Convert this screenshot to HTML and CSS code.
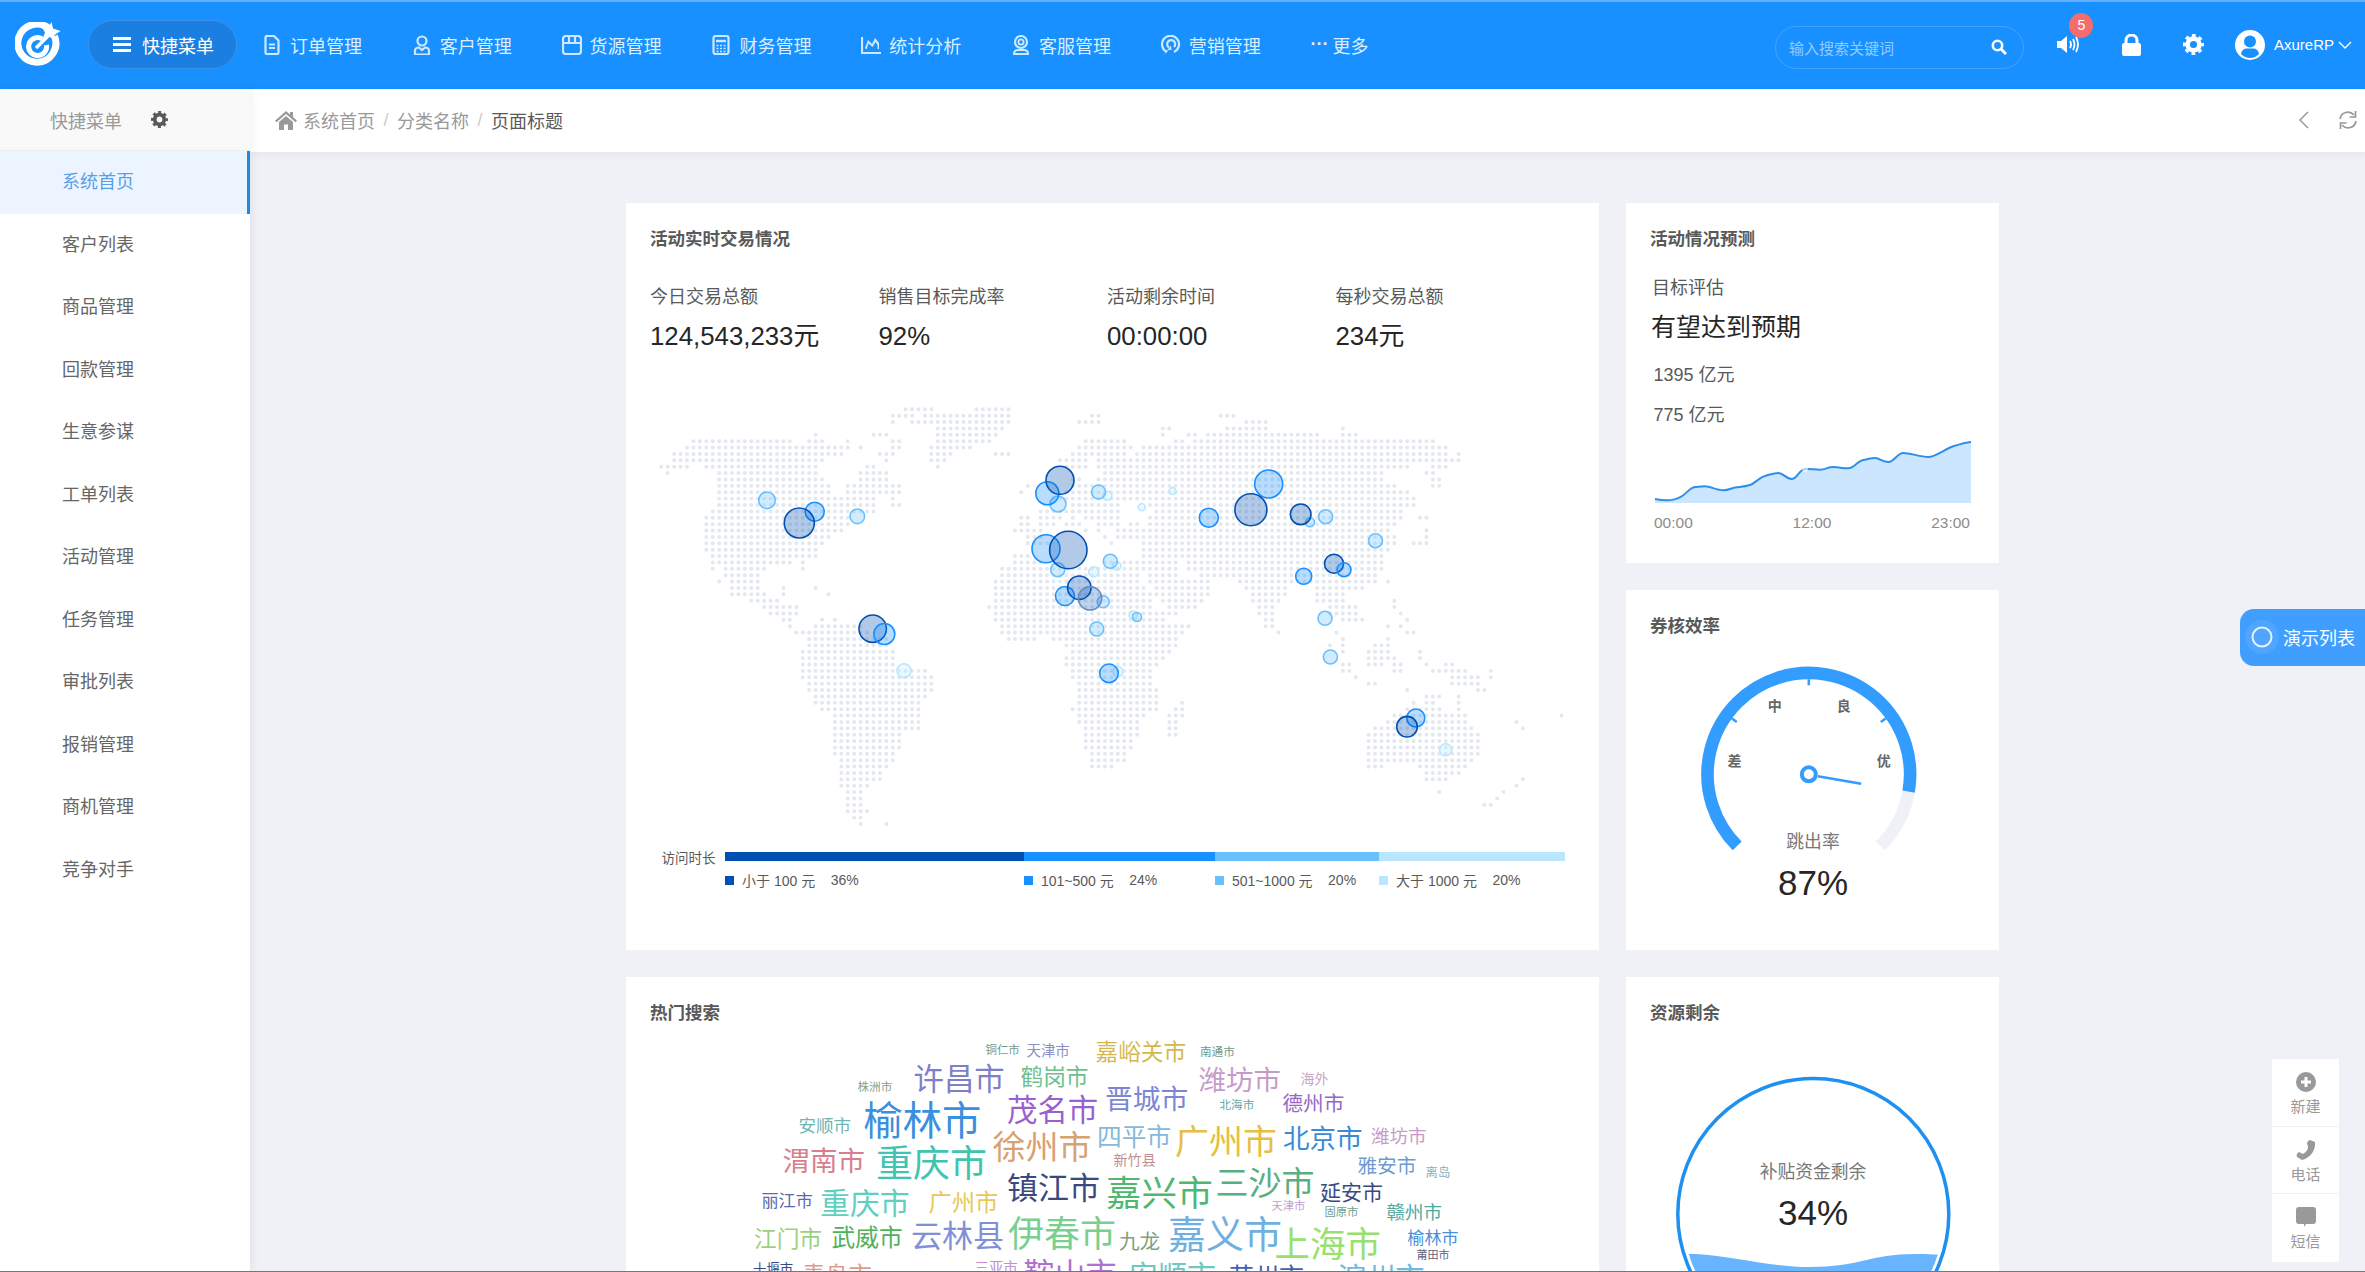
FILE: index.html
```html
<!DOCTYPE html>
<html lang="zh-CN">
<head>
<meta charset="utf-8">
<title>系统首页</title>
<link rel="stylesheet" href="styles.css">
</head>
<body>
<svg class="defs" width="0" height="0" aria-hidden="true">
  <symbol id="gear" viewBox="0 0 20 20">
    <circle cx="10" cy="10" r="5.6" fill="none" stroke="currentColor" stroke-width="4.4"/>
    <circle cx="10" cy="10" r="8.3" fill="none" stroke="currentColor" stroke-width="3.4" stroke-dasharray="3.4 3.12" stroke-dashoffset="1.7"/>
  </symbol>
</svg>
<div class="app">
  <header class="topbar">
    <svg class="logo" viewBox="0 0 46 46">
      <path d="M34 6.5A19 19 0 1 0 39.5 14" fill="none" stroke="#fff" stroke-width="7"/>
      <path d="M27.5 17A9 9 0 1 0 31.5 23" fill="none" stroke="#fff" stroke-width="5"/>
      <path d="M21 26L35 12" stroke="#fff" stroke-width="3.5"/>
      <path d="M36.5 0L38 6.5L45.5 9L39.5 13L39.5 18L34 14.5L28 16L30 10.5L27 5.5L33 6Z" fill="#fff"/>
    </svg>
    <button class="quick">
      <svg class="quick-icon" viewBox="0 0 18 15"><path d="M0 1.5H18M0 7.5H18M0 13.5H18" stroke="#fff" stroke-width="3"/></svg>
      <span>快捷菜单</span>
    </button>
    <nav class="nav">
      <a class="nav-item">
        <svg viewBox="0 0 20 20" class="nav-icon"><path d="M3.5 2.5Q3.5 1 5 1H12L16.5 5.5V17.5Q16.5 19 15 19H5Q3.5 19 3.5 17.5Z" fill="none" stroke="currentColor" stroke-width="2.2"/><path d="M7 9.5H13M7 13H13" stroke="currentColor" stroke-width="1.8"/></svg>
        <span>订单管理</span>
      </a>
      <a class="nav-item">
        <svg viewBox="0 0 20 20" class="nav-icon"><circle cx="10" cy="6" r="4.5" fill="none" stroke="currentColor" stroke-width="2.2"/><path d="M3 19.5V16Q3 12.5 7 12.5L10 15L13 12.5Q17 12.5 17 16V19.5Z" fill="none" stroke="currentColor" stroke-width="2.2"/></svg>
        <span>客户管理</span>
      </a>
      <a class="nav-item">
        <svg viewBox="0 0 20 20" class="nav-icon"><path d="M1 4Q1 1 4 1H16Q19 1 19 4V16Q19 19 16 19H4Q1 19 1 16ZM1 8H19M7 1V8M13 1V8" fill="none" stroke="currentColor" stroke-width="2.2"/></svg>
        <span>货源管理</span>
      </a>
      <a class="nav-item">
        <svg viewBox="0 0 20 20" class="nav-icon"><rect x="2.5" y="1" width="15" height="18" rx="2" fill="none" stroke="currentColor" stroke-width="2.2"/><path d="M5 6H15" stroke="currentColor" stroke-width="2.4"/><path d="M5.5 10.5H14.5M5.5 13.5H14.5M5.5 16.5H14.5" stroke="currentColor" stroke-width="1.7" stroke-dasharray="2 1.5"/></svg>
        <span>财务管理</span>
      </a>
      <a class="nav-item">
        <svg viewBox="0 0 20 20" class="nav-icon"><path d="M1 2V18H20" fill="none" stroke="currentColor" stroke-width="2.2"/><path d="M4 13L7 5L11 9L14 3L18 8V14H5Z" fill="currentColor"/><path d="M6 13L7.5 8.5L11.5 12L14.5 7L16.5 10V14H6Z" fill="#1890ff"/></svg>
        <span>统计分析</span>
      </a>
      <a class="nav-item">
        <svg viewBox="0 0 20 20" class="nav-icon"><circle cx="10" cy="7" r="6" fill="none" stroke="currentColor" stroke-width="2.2"/><circle cx="10" cy="7" r="2.6" fill="none" stroke="currentColor" stroke-width="1.8"/><path d="M3 19Q3 15 7 15H13Q17 15 17 19Z" fill="none" stroke="currentColor" stroke-width="2"/></svg>
        <span>客服管理</span>
      </a>
      <a class="nav-item">
        <svg viewBox="0 0 20 20" class="nav-icon"><path d="M6 17A8.5 8.5 0 1 1 13 17" fill="none" stroke="currentColor" stroke-width="2.2"/><path d="M8 12.5A4 4 0 1 1 13 12" fill="none" stroke="currentColor" stroke-width="2.2"/><path d="M2.5 20L10 10.5L10.5 15L7.5 15Z" fill="currentColor"/></svg>
        <span>营销管理</span>
      </a>
      <a class="nav-item nav-more">
        <span class="dots">···</span>
        <span>更多</span>
      </a>
    </nav>
    <div class="top-tools">
      <div class="search">
        <span class="search-text">输入搜索关键词</span>
        <svg class="search-icon" viewBox="0 0 16 16"><circle cx="6.5" cy="6.5" r="4.7" fill="none" stroke="#fff" stroke-width="2.6"/><path d="M10 10L15 15" stroke="#fff" stroke-width="3"/></svg>
      </div>
      <div class="speaker">
        <svg class="speaker-icon" viewBox="0 0 24 19"><path d="M0 6H4L10 1V18L4 13H0Z" fill="#fff"/><path d="M13 6Q15 9.5 13 13M16 4Q19 9.5 16 15M19 2Q23 9.5 19 17" fill="none" stroke="#fff" stroke-width="1.8"/></svg>
        <span class="badge">5</span>
      </div>
      <svg class="lock" viewBox="0 0 19 22"><path d="M4 10V6.5A5.5 5.5 0 0 1 15 6.5V10" fill="none" stroke="#fff" stroke-width="3"/><rect y="9" width="19" height="13" rx="2" fill="#fff"/></svg>
      <svg class="gear-top"><use href="#gear"/></svg>
      <svg class="avatar" viewBox="0 0 30 30"><circle cx="15" cy="15" r="15" fill="#fff"/><circle cx="15" cy="11.5" r="6" fill="#1890ff"/><path d="M6 24Q7 18.5 12 18.5H18Q23 18.5 24 24Q20 28 15 28Q10 28 6 24Z" fill="#1890ff"/></svg>
      <span class="user">AxureRP</span>
      <svg class="chev" viewBox="0 0 14 8"><path d="M1 1L7 7L13 1" fill="none" stroke="#fff" stroke-width="1.3"/></svg>
    </div>
  </header>
  <div class="body">
    <aside class="side">
      <div class="side-head">
        <span>快捷菜单</span>
        <svg class="side-gear"><use href="#gear"/></svg>
      </div>
      <ul class="menu">
        <li class="menu-item active">系统首页</li>
        <li class="menu-item">客户列表</li>
        <li class="menu-item">商品管理</li>
        <li class="menu-item">回款管理</li>
        <li class="menu-item">生意参谋</li>
        <li class="menu-item">工单列表</li>
        <li class="menu-item">活动管理</li>
        <li class="menu-item">任务管理</li>
        <li class="menu-item">审批列表</li>
        <li class="menu-item">报销管理</li>
        <li class="menu-item">商机管理</li>
        <li class="menu-item">竞争对手</li>
      </ul>
    </aside>
    <main class="main">
      <div class="crumbs">
        <svg class="home" viewBox="0 0 22 19"><path d="M11 0L15 3.5V1H18V6L22 9.8L20.5 11.2L11 3L1.500 11.2L0 9.8Z" fill="#999"/><path d="M4 11L11 5L18 11V19H13V13.5H9V19H4Z" fill="#999"/></svg>
        <span>系统首页</span><i class="sep">/</i><span>分类名称</span><i class="sep">/</i><span class="current">页面标题</span>
        <div class="crumb-tools">
          <svg class="crumb-back" viewBox="0 0 11 18"><path d="M10 1L2 9L10 17" fill="none" stroke="#999" stroke-width="1.5"/></svg>
          <svg class="crumb-refresh" viewBox="0 0 20 20"><path d="M2 9A8 8 0 0 1 16 5M18 11A8 8 0 0 1 4 15" fill="none" stroke="#999" stroke-width="1.7"/><path d="M17.5 1V7H11.5M2.5 19V13H8.5" fill="none" stroke="#999" stroke-width="1.7"/></svg>
        </div>
      </div>
      <div class="content">
        <section class="card card-map">
          <h2 class="card-title">活动实时交易情况</h2>
          <div class="stats">
            <div><p class="stat-label">今日交易总额</p><p class="stat-value">124,543,233元</p></div>
            <div><p class="stat-label">销售目标完成率</p><p class="stat-value">92%</p></div>
            <div><p class="stat-label">活动剩余时间</p><p class="stat-value">00:00:00</p></div>
            <div><p class="stat-label">每秒交易总额</p><p class="stat-value">234元</p></div>
          </div>
          <svg class="map" viewBox="640 400 940 440">
            <g transform="translate(642 409.3) scale(6.43 6.38)">
              <path class="dots-map" d="M41 0H45M52 0H57M39 1H42M44 1H57M70 1H71M90 1H92M39 2h.01M42 2H57M68 2H71M94 2H97M46 3H56M81 3H82M91 3H97M109 3h.01M27 4h.01M36 4H38M46 4H55M81 4h.01M85 4H86M88 4H105M109 4H111M8 5H17M18 5H23M26 5H27M28 5h.01M32 5h.01M39 5H40M46 5H54M69 5H75M83 5H84M86 5H123M7 6H32M34 6h.01M39 6H40M45 6H51M68 6H76M78 6H125M5 7H31M37 7H39M45 7H48M55 7H57M67 7H75M77 7H125M127 7h.01M5 8H28M38 8h.01M45 8H47M65 8H69M71 8H127M3 9H7M10 9H27M35 9H36M46 9h.01M66 9H69M71 9H119M123 9H125M4 10h.01M12 10H27M34 10H38M72 10H115M122 10H123M12 11H28M34 11H38M67 11H68M71 11H115M123 11H124M12 12H29M32 12H40M60 12h.01M67 12H117M123 12H124M12 13H29M32 13H40M59 13h.01M66 13H119M12 14H36M39 14h.01M64 14H120M12 15H36M39 15H40M67 15H74M79 15H120M11 16H36M62 16H74M80 16H118M10 17H32M59 17H60M62 17H65M67 17h.01M69 17H74M79 17H118M121 17H122M10 18H32M59 18H60M62 18H64M66 18H68M71 18H74M76 18H77M79 18H117M10 19H31M58 19H62M69 19h.01M71 19h.01M74 19H116M122 19h.01M10 20H29M60 20H62M72 20h.01M74 20H117M122 20h.01M10 21H28M60 21H63M73 21h.01M78 21H116M117 21h.01M120 21H122M10 22H27M78 22H116M11 23H27M58 23H60M78 23H115M11 24H23M25 24h.01M58 24H62M72 24H77M78 24H83M85 24H115M11 25h.01M13 25H19M25 25h.01M56 25H77M78 25H83M85 25H115M13 26H18M56 26H77M79 26H83M87 26H114M12 27h.01M14 27H18M55 27H77M79 27H88M93 27H114M116 27h.01M14 28H18M22 28h.01M27 28h.01M55 28H78M80 28H88M94 28H100M105 28H112M14 29H19M22 29h.01M29 29h.01M55 29H79M80 29H88M95 29H100M105 29H109M17 30H21M55 30H79M81 30H87M95 30H99M105 30H109M117 30h.01M19 31H24M54 31H79M82 31H86M96 31H98M107 31H111M117 31h.01M20 32H24M55 32H83M96 32H98M107 32H111M118 32h.01M22 33H23M28 33h.01M30 33h.01M55 33H81M97 33H98M109 33H112M119 33h.01M23 34h.01M27 34H34M56 34H85M97 34H98M116 34h.01M118 34h.01M24 35H35M56 35H84M99 35h.01M108 35h.01M119 35H120M26 36H38M57 36H61M64 36H83M109 36h.01M116 36h.01M26 37H38M66 37H83M107 37h.01M109 37h.01M114 37H116M25 38H39M67 38H82M109 38h.01M113 38H116M121 38h.01M25 39H39M66 39H81M113 39H117M121 39h.01M25 40H39M66 40H80M109 40H110M113 40H115M117 40H118M122 40h.01M125 40H126M25 41H44M67 41H79M109 41H110M117 41H118M123 41H128M132 41h.01M25 42H45M67 42H79M111 42h.01M126 42H130M132 42h.01M26 43H45M68 43H79M113 43H114M126 43H130M26 44H45M68 44H80M119 44h.01M130 44H131M27 45H44M68 45H80M122 45H124M127 45h.01M27 46H43M68 46H80M84 46h.01M120 46h.01M122 46H123M127 46h.01M28 47H43M67 47H80M83 47H84M119 47H124M127 47h.01M30 48H43M68 48H78M82 48H84M117 48H128M143 48h.01M30 49H43M68 49H77M82 49H83M116 49H128M136 49h.01M30 50H43M69 50H77M82 50H83M114 50H129M137 50h.01M30 51H40M69 51H77M82 51H83M113 51H130M30 52H40M69 52H76M113 52H130M30 53H40M69 53H76M113 53H130M30 54H39M70 54H75M113 54H130M31 55H39M70 55H75M113 55H129M31 56H38M70 56H73M113 56H115M121 56h.01M122 56H128M31 57H37M122 57H127M31 58H37M122 58H125M137 58h.01M31 59H35M136 59h.01M32 60H34M124 60h.01M134 60h.01M32 61H34M133 61h.01M32 62H34M131 62H132M32 63H35M33 64H34M34 65h.01M38 65h.01"/>
            </g>
            <circle class="b-xl" cx="1445.6" cy="749.7" r="6"/>
            <circle class="b-xl" cx="904" cy="670.7" r="7"/>
            <circle class="b-xl" cx="1118" cy="671.7" r="5"/>
            <circle class="b-xl" cx="1107.4" cy="495.7" r="4.5"/>
            <circle class="b-xl" cx="1172.6" cy="491" r="3.5"/>
            <circle class="b-xl" cx="1141.8" cy="507.3" r="3.5"/>
            <circle class="b-xl" cx="1116.9" cy="566" r="4"/>
            <circle class="b-xl" cx="1093.7" cy="571.7" r="5"/>
            <circle class="b-xl" cx="1133" cy="615" r="4"/>
            <circle class="b-l" cx="767" cy="500.3" r="8.3"/>
            <circle class="b-l" cx="857.3" cy="516.3" r="7.3"/>
            <circle class="b-l" cx="1058" cy="504" r="8"/>
            <circle class="b-l" cx="1057.7" cy="569.7" r="7"/>
            <circle class="b-l" cx="1098.5" cy="492" r="7"/>
            <circle class="b-l" cx="1325.6" cy="516.7" r="7"/>
            <circle class="b-l" cx="1310" cy="522.3" r="4.5"/>
            <circle class="b-l" cx="1375.5" cy="540.7" r="7"/>
            <circle class="b-l" cx="1110.3" cy="561.3" r="7"/>
            <circle class="b-l" cx="1103.2" cy="601.7" r="6"/>
            <circle class="b-l" cx="1096.7" cy="629" r="7"/>
            <circle class="b-l" cx="1137" cy="617" r="4.5"/>
            <circle class="b-l" cx="1325" cy="618.3" r="7"/>
            <circle class="b-l" cx="1330.4" cy="657" r="7"/>
            <circle class="b-m" cx="814.7" cy="511.7" r="9.5"/>
            <circle class="b-m" cx="1047.3" cy="493.3" r="11.5"/>
            <circle class="b-m" cx="1046" cy="548.7" r="14"/>
            <circle class="b-m" cx="1065" cy="596" r="9.5"/>
            <circle class="b-m" cx="1268.7" cy="484" r="14"/>
            <circle class="b-m" cx="1208.8" cy="517.7" r="9.5"/>
            <circle class="b-m" cx="1303.7" cy="576.3" r="8"/>
            <circle class="b-m" cx="1109" cy="673.3" r="9.3"/>
            <circle class="b-m" cx="1415.8" cy="718" r="9"/>
            <circle class="b-d" cx="799.3" cy="523" r="15"/>
            <circle class="b-d" cx="1060" cy="480.3" r="14"/>
            <circle class="b-d" cx="1068.3" cy="550" r="18.7"/>
            <circle class="b-d" cx="1079.3" cy="587.7" r="11.7"/>
            <circle class="b-g" cx="1090" cy="598.3" r="11.7"/>
            <circle class="b-d" cx="872.7" cy="628.7" r="13.7"/>
            <circle class="b-m" cx="884.3" cy="634" r="10.5"/>
            <circle class="b-d" cx="1250.9" cy="509.7" r="16"/>
            <circle class="b-d" cx="1300.7" cy="514.3" r="10.3"/>
            <circle class="b-d" cx="1334" cy="563.7" r="9.5"/>
            <circle class="b-m" cx="1344" cy="569.7" r="7"/>
            <circle class="b-d" cx="1407" cy="726.7" r="10.3"/>
          </svg>
          <div class="bar-row">
            <span class="bar-label">访问时长</span>
            <div class="bar">
              <i class="c1"></i><i class="c2"></i><i class="c3"></i><i class="c4"></i>
            </div>
          </div>
          <div class="legend">
            <div class="legend-item"><i class="swatch c1"></i><span>小于 100 元</span><span>36%</span></div>
            <div class="legend-item"><i class="swatch c2"></i><span>101~500 元</span><span>24%</span></div>
            <div class="legend-item"><i class="swatch c3"></i><span>501~1000 元</span><span>20%</span></div>
            <div class="legend-item"><i class="swatch c4"></i><span>大于 1000 元</span><span>20%</span></div>
          </div>
        </section>
        <div class="side-cards">
          <section class="card card-forecast">
            <h2 class="card-title">活动情况预测</h2>
            <p class="fc-label">目标评估</p>
            <p class="fc-main">有望达到预期</p>
            <p class="fc-num first">1395 亿元</p>
            <p class="fc-num">775 亿元</p>
            <svg class="spark" viewBox="0 0 316 61">
              <path d="M0 57S6 58.3 11.7 58.3S22 57 26.7 54.3S35 45.5 40 45S45 44.3 50 44.3S62 48.3 68.3 48.3S76 46 81.7 45.3S90 44.5 95 43S104 35.5 110 34S118 31 123.3 31S131 37 136.7 37S144 27.5 150 27S159 27.7 165 27.7S172 25 178.3 25S187 26.5 193.3 26.3S202 19 208.3 18S215 16 220 16S227 20 233.3 20S242 11 248.3 11S266 15 273.3 15S290 7 298.3 4.3S310 .5 316 0V61H0Z" fill="#cce6ff"/>
              <path d="M0 57S6 58.3 11.7 58.3S22 57 26.7 54.3S35 45.5 40 45S45 44.3 50 44.3S62 48.3 68.3 48.3S76 46 81.7 45.3S90 44.5 95 43S104 35.5 110 34S118 31 123.3 31S131 37 136.7 37S144 27.5 150 27S159 27.7 165 27.7S172 25 178.3 25S187 26.5 193.3 26.3S202 19 208.3 18S215 16 220 16S227 20 233.3 20S242 11 248.3 11S266 15 273.3 15S290 7 298.3 4.3S310 .5 316 0" fill="none" stroke="#2f8fe8" stroke-width="2"/>
              <circle cx="150" cy="27" r="3" fill="#fff" opacity=".6"/>
            </svg>
            <div class="spark-axis"><span>00:00</span><span>12:00</span><span>23:00</span></div>
          </section>
          <section class="card card-gauge">
            <h2 class="card-title">券核效率</h2>
            <svg class="gauge" viewBox="-115.8 -124.3 240 205">
              <path d="M99.8 17.4A101.3 101.3 0 0 1 71.6 71.6" fill="none" stroke="#eff1f6" stroke-width="12.6"/>
              <path d="M-71.6 71.6A101.3 101.3 0 1 1 99.8 17.4" fill="none" stroke="#339cff" stroke-width="12.6"/>
              <path d="M0 -95V-89M-76.9 -55.8L-72 -52.3M76.9 -55.8L72 -52.3" stroke="#339cff" stroke-width="2.6"/>
              <text class="gauge-mark" x="-74.3" y="-13">差</text>
              <text class="gauge-mark" x="-34" y="-68.3">中</text>
              <text class="gauge-mark" x="35" y="-68.3">良</text>
              <text class="gauge-mark" x="75" y="-13">优</text>
              <path d="M9 2L52.4 9.4" stroke="#339cff" stroke-width="2.6"/>
              <circle r="7" fill="#fff" stroke="#339cff" stroke-width="4"/>
            </svg>
            <p class="gauge-cap">跳出率</p>
            <p class="big-num">87%</p>
          </section>
        </div>
        <section class="card card-cloud">
          <h2 class="card-title">热门搜索</h2>
          <svg class="cloud" viewBox="640 1030 930 260">
            <text x="985.5" y="1051" font-size="11.4" fill="#6f9a88">铜仁市</text>
            <text x="1026.5" y="1051" font-size="14.4" fill="#8d8fc7">天津市</text>
            <text x="1095.5" y="1052" font-size="22.7" fill="#d5b84a">嘉峪关市</text>
            <text x="1200" y="1053" font-size="11.6" fill="#6f9a88">南通市</text>
            <text x="913.5" y="1079" font-size="30.4" fill="#7f7fc8">许昌市</text>
            <text x="1020.5" y="1077" font-size="22.7" fill="#6fbf8f">鹤岗市</text>
            <text x="1198.5" y="1080" font-size="27.5" fill="#c79bc9">潍坊市</text>
            <text x="1300.5" y="1080" font-size="14" fill="#c9a7c4">海外</text>
            <text x="857.5" y="1088" font-size="11.6" fill="#7fa38f">株洲市</text>
            <text x="1105" y="1099" font-size="27.8" fill="#7d86d6">晋城市</text>
            <text x="1219.5" y="1106" font-size="11.6" fill="#5fa9a0">北海市</text>
            <text x="1282.5" y="1104" font-size="20.6" fill="#9468c4">德州市</text>
            <text x="863.5" y="1119" font-size="39.3" fill="#3a8fe0">榆林市</text>
            <text x="1007" y="1110" font-size="30.4" fill="#9a5fd0">茂名市</text>
            <text x="798.5" y="1126" font-size="17.5" fill="#6fb5b5">安顺市</text>
            <text x="1097" y="1137" font-size="24.7" fill="#86b8dc">四平市</text>
            <text x="1175" y="1141" font-size="34" fill="#e5c040">广州市</text>
            <text x="1283" y="1138" font-size="26.5" fill="#3a8ad8">北京市</text>
            <text x="1371" y="1137" font-size="18.5" fill="#c79bc9">潍坊市</text>
            <text x="992.5" y="1147" font-size="33" fill="#d9a070">徐州市</text>
            <text x="782.5" y="1161" font-size="27.5" fill="#d77f8f">渭南市</text>
            <text x="876" y="1163" font-size="37" fill="#3fc4b0">重庆市</text>
            <text x="1113.5" y="1161" font-size="14.1" fill="#c0908f">新竹县</text>
            <text x="1357.5" y="1166" font-size="19.6" fill="#6f9ad0">雅安市</text>
            <text x="1425.5" y="1174" font-size="12.4" fill="#88b0b8">离岛</text>
            <text x="1007" y="1187" font-size="31" fill="#3a4a80">镇江市</text>
            <text x="1106" y="1192" font-size="35.6" fill="#4fb870">嘉兴市</text>
            <text x="1215.5" y="1183" font-size="33" fill="#58b080">三沙市</text>
            <text x="1320" y="1193" font-size="21" fill="#3a4a80">延安市</text>
            <text x="761.5" y="1201" font-size="17.1" fill="#5a6aa8">丽江市</text>
            <text x="820" y="1203" font-size="29.9" fill="#5fd0c0">重庆市</text>
            <text x="928.5" y="1203" font-size="23.3" fill="#e8c858">广州市</text>
            <text x="1271.5" y="1207" font-size="11.3" fill="#c0a0d0">天津市</text>
            <text x="1324.5" y="1213" font-size="11.3" fill="#70a090">固原市</text>
            <text x="1386.5" y="1213" font-size="18.5" fill="#4fa8a0">赣州市</text>
            <text x="754" y="1239" font-size="22.7" fill="#9cd080">江门市</text>
            <text x="831.5" y="1238" font-size="23.7" fill="#4fb060">武威市</text>
            <text x="911" y="1235" font-size="31" fill="#7f90d8">云林县</text>
            <text x="1008" y="1233" font-size="36" fill="#78d090">伊春市</text>
            <text x="1119" y="1242" font-size="20.6" fill="#80a080">九龙</text>
            <text x="1168" y="1233" font-size="38" fill="#6fb0e0">嘉义市</text>
            <text x="1274.5" y="1243" font-size="35.5" fill="#98e070">上海市</text>
            <text x="1407.5" y="1238" font-size="17" fill="#4a90d8">榆林市</text>
            <text x="1416.5" y="1256" font-size="11" fill="#606078">莆田市</text>
            <text x="753" y="1270" font-size="13.4" fill="#3a4a80">十堰市</text>
            <text x="802" y="1276" font-size="23.3" fill="#e09a90">青岛市</text>
            <text x="974.5" y="1268" font-size="14.4" fill="#c090d0">三亚市</text>
            <text x="1023.5" y="1273" font-size="31" fill="#b070d0">鞍山市</text>
            <text x="1129" y="1276" font-size="29" fill="#70c8c0">安顺市</text>
            <text x="1229" y="1277" font-size="25" fill="#4060b0">苏州市</text>
            <text x="1337.5" y="1278" font-size="29" fill="#70b8e0">滨州市</text>
          </svg>
        </section>
        <section class="card card-water">
          <h2 class="card-title">资源剩余</h2>
          <svg class="water" viewBox="0 0 284 284">
            <defs><clipPath id="inner"><circle cx="142.3" cy="141" r="131"/></clipPath></defs>
            <circle cx="142.3" cy="141" r="135.5" fill="#fff" stroke="#1e90f0" stroke-width="3.5"/>
            <path clip-path="url(#inner)" d="M0 181C50 178 90 194 139 194S200 181 243.5 181S284 186 284 186V284H0Z" fill="#69b4ff"/>
            <text class="water-label" x="142" y="99">补贴资金剩余</text>
            <text class="water-num" x="142" y="139">34%</text>
          </svg>
        </section>
      </div>
    </main>
  </div>
</div>
<aside class="demo">
  <svg class="demo-ring" viewBox="0 0 36 36"><circle cx="18" cy="18" r="17" fill="#fff" opacity=".08"/><circle cx="18" cy="18" r="9.5" fill="none" stroke="#e6f3ff" stroke-width="2"/></svg>
  <span>演示列表</span>
</aside>
<aside class="tools">
  <div class="tool">
    <svg viewBox="0 0 20 20"><circle cx="10" cy="10" r="10" fill="#999"/><path d="M10 5V15M5 10H15" stroke="#fff" stroke-width="3"/></svg>
    <span>新建</span>
  </div>
  <div class="tool">
    <svg viewBox="0 0 20 20"><path d="M14 0L19 2C20 9 15 18 6 20L1 17C0 15 1 13 3 12L7 14C10 12 12 10 12 7L11 3C11.5 1.5 12.5 .5 14 0Z" fill="#999"/></svg>
    <span>电话</span>
  </div>
  <div class="tool">
    <svg viewBox="0 0 20 20"><path d="M3 0H17Q20 0 20 3V14Q20 17 17 17H10L8 20V17H3Q0 17 0 14V3Q0 0 3 0Z" fill="#999"/></svg>
    <span>短信</span>
  </div>
</aside>
</body>
</html>
```

FILE: styles.css
```css
* { box-sizing: border-box; }
html, body { margin: 0; height: 100%; overflow: hidden; }
body {
  font-family: "Liberation Sans", "Noto Sans CJK SC", sans-serif;
  font-size: 18px;
  color: #595959;
  background: #eff1f6;
}
p, h2, ul { margin: 0; padding: 0; }
i { font-style: normal; }
.defs { position: absolute; }

.app {
  height: 1272px;
  display: flex;
  flex-direction: column;
  border-bottom: 1px solid #777;
  overflow: hidden;
}

/* top bar */
.topbar {
  flex: 0 0 89px;
  display: flex;
  align-items: center;
  background: #1890ff;
  border-top: 2px solid #5fb0f5;
  padding: 0 13px 2px 15px;
  color: #fff;
}
.logo { width: 46px; height: 46px; margin-right: 27px; flex: none; }
.quick {
  width: 149px;
  height: 49px;
  display: flex;
  align-items: center;
  gap: 11px;
  padding: 0 0 0 24px;
  background: #1a7fe0;
  border: 1px solid #3b93ea;
  border-radius: 25px;
  color: #fff;
  font: inherit;
}
.quick-icon { width: 18px; height: 15px; flex: none; }
.nav { display: flex; align-items: center; gap: 49.8px; margin-left: 25px; }
.nav-item { display: flex; align-items: center; gap: 8px; color: #dcefff; white-space: nowrap; }
.nav-icon { width: 20px; height: 20px; color: #cfe8ff; flex: none; }
.nav-more { gap: 4px; }
.dots { font-weight: 700; width: 18px; text-align: center; }
.top-tools { margin-left: auto; display: flex; align-items: center; }
.search {
  width: 249.5px;
  height: 43px;
  margin-top: 5px;
  display: flex;
  align-items: center;
  justify-content: space-between;
  padding: 0 16px 0 13px;
  border: 1px solid rgba(255, 255, 255, .18);
  border-radius: 22px;
}
.search-text { font-size: 15px; color: rgba(255, 255, 255, .55); }
.search-icon { width: 16px; height: 16px; }
.speaker { position: relative; margin-left: 33px; width: 24px; height: 19px; }
.speaker-icon { display: block; width: 24px; height: 19px; }
.badge {
  position: absolute;
  left: 12px;
  top: -22px;
  width: 24px;
  height: 25px;
  border-radius: 50%;
  background: #f56c6c;
  color: #fff;
  font-size: 14px;
  line-height: 25px;
  text-align: center;
}
.lock { width: 19px; height: 22px; margin-left: 41px; }
.gear-top { width: 21px; height: 21px; margin-left: 41.5px; color: #fff; }
.avatar { width: 30px; height: 30px; margin-left: 31px; }
.user { margin-left: 9px; font-size: 15px; color: #fff; }
.chev { width: 14px; height: 8px; margin-left: 4px; }

/* body */
.body { flex: 1; display: flex; min-height: 0; }
.side {
  flex: 0 0 250px;
  background: #fff;
  box-shadow: 2px 0 8px rgba(0, 0, 0, .06);
  z-index: 2;
}
.side-head {
  height: 62px;
  display: flex;
  align-items: center;
  padding-left: 50px;
  gap: 29px;
  background: #f9f9f9;
  border-bottom: 1px solid #eee;
  color: #999;
}
.side-gear { width: 17px; height: 17px; color: #595959; }
.menu { list-style: none; }
.menu-item {
  height: 62.5px;
  line-height: 62.5px;
  padding-left: 62px;
  color: #666;
}
.menu-item.active {
  background: #ecf5ff;
  border-right: 3px solid #1e88e5;
  color: #5a9ee8;
}

.main { flex: 1; min-width: 0; display: flex; flex-direction: column; }
.crumbs {
  flex: 0 0 63px;
  display: flex;
  align-items: center;
  padding: 0 7px 1px 25px;
  background: #fff;
  box-shadow: 0 2px 8px rgba(0, 0, 0, .05);
  color: #999;
  z-index: 1;
}
.home { width: 22px; height: 19px; margin-right: 6px; }
.sep { margin: 0 8.5px; color: #ccc; }
.current { color: #595959; }
.crumb-tools { margin-left: auto; display: flex; align-items: center; gap: 29px; }
.crumb-back { width: 11px; height: 18px; }
.crumb-refresh { width: 20px; height: 20px; }

.content {
  display: grid;
  grid-template-columns: 973px 373px;
  grid-auto-rows: min-content;
  gap: 27px;
  margin-left: 376px;
  padding-top: 51px;
}
.card { background: #fff; padding: 24px 23px 0 24px; overflow: hidden; }
.card-title { font-size: 17.5px; line-height: 24px; font-weight: 700; color: #595959; }

.card-map { height: 747px; }
.stats { display: grid; grid-template-columns: repeat(4, 228.5px); margin-top: 34px; }
.stat-label { line-height: 24px; }
.stat-value { margin-top: 9px; font-size: 25.8px; line-height: 36px; color: #262626; }
.map { display: block; width: 940px; height: 440px; margin: 46px 0 0 -10px; }
.dots-map {
  fill: none;
  stroke: #e3e8f0;
  stroke-width: .62;
  stroke-linecap: round;
  stroke-dasharray: 0 .9999;
}
.b-d, .b-m, .b-l, .b-xl, .b-g { stroke-width: 1.6; fill-opacity: .3; }
.b-d { stroke: #0050b3; fill: #0050b3; }
.b-g { stroke: #6a8bbf; fill: #0050b3; fill-opacity: .25; }
.b-m { stroke: #1890ff; fill: #1890ff; }
.b-l { stroke: #69c0ff; fill: #69c0ff; }
.b-xl { stroke: #bae7ff; fill: #bae7ff; }
.bar-row { display: flex; align-items: center; margin: 12px 0 0 11.5px; height: 9px; }
.bar-label { width: 63px; font-size: 13.5px; white-space: nowrap; }
.bar { display: grid; grid-template-columns: 299px 191px 164px 186px; height: 9px; }
.c1 { background: #0050b3; }
.c2 { background: #1890ff; }
.c3 { background: #69c0ff; }
.c4 { background: #bae7ff; }
.legend {
  display: grid;
  grid-template-columns: 299px 191px 164px 186px;
  margin: 10px 0 0 74.5px;
  font-size: 14px;
}
.legend-item { display: flex; align-items: center; gap: 8.5px; height: 18px; white-space: nowrap; }
.legend-item span + span { margin-left: 7px; }
.swatch { width: 9px; height: 9px; flex: none; }

.side-cards { display: flex; flex-direction: column; gap: 27px; }
.card-forecast { height: 359.5px; }
.fc-label { margin: 25px 0 0 2px; line-height: 24px; }
.fc-main { margin: 9px 0 0 1px; font-size: 25px; line-height: 36px; color: #262626; }
.fc-num { margin: 14px 0 0 3.5px; font-size: 18px; line-height: 26px; }
.fc-num.first { margin-top: 17px; }
.spark { display: block; width: 316px; height: 61px; margin: 14px 0 0 5px; overflow: visible; }
.spark-axis {
  display: flex;
  justify-content: space-between;
  width: 316px;
  margin: 10px 0 0 4px;
  font-size: 15.5px;
  line-height: 20px;
  color: #8c8c8c;
}
.card-gauge { height: 360.5px; }
.gauge { display: block; width: 240px; height: 205px; margin: 12px auto 0; }
.gauge-mark { font-size: 14px; font-weight: 700; fill: #666; text-anchor: middle; dominant-baseline: central; }
.gauge-cap { margin-top: -26px; text-align: center; line-height: 26px; font-size: 17.8px; color: #777; position: relative; }
.big-num { margin-top: 6px; text-align: center; font-size: 35px; line-height: 44px; color: #262626; }

.card-cloud { height: 320px; }
.cloud { display: block; width: 930px; height: 260px; margin: 2.5px 0 0 -10px; }
.cloud text { dominant-baseline: central; font-family: "Noto Sans CJK SC", sans-serif; }
.card-water { height: 320px; }
.water { display: block; width: 284px; height: 284px; margin: 48px 0 0 21px; }
.water-label { font-size: 17.8px; fill: #777; text-anchor: middle; dominant-baseline: central; }
.water-num { font-size: 35px; fill: #262626; text-anchor: middle; dominant-baseline: central; }

/* floating */
.demo {
  position: fixed;
  right: 0;
  top: 609px;
  width: 125px;
  height: 57px;
  display: flex;
  align-items: center;
  gap: 3px;
  padding: 0 0 2px 4px;
  background: #409eff;
  border-radius: 14px 0 0 14px;
  color: #fff;
}
.demo-ring { width: 36px; height: 36px; flex: none; }
.tools {
  position: fixed;
  left: 2272px;
  top: 1059px;
  width: 67px;
  display: flex;
  flex-direction: column;
  background: #fff;
}
.tool {
  height: 67.5px;
  display: flex;
  flex-direction: column;
  align-items: center;
  padding-top: 13px;
  gap: 5px;
  border-bottom: 1px solid #eff1f6;
  color: #999;
  font-size: 15px;
  line-height: 20px;
}
.tool:last-child { border-bottom: 0; }
.tool svg { width: 20px; height: 20px; flex: none; }
```
